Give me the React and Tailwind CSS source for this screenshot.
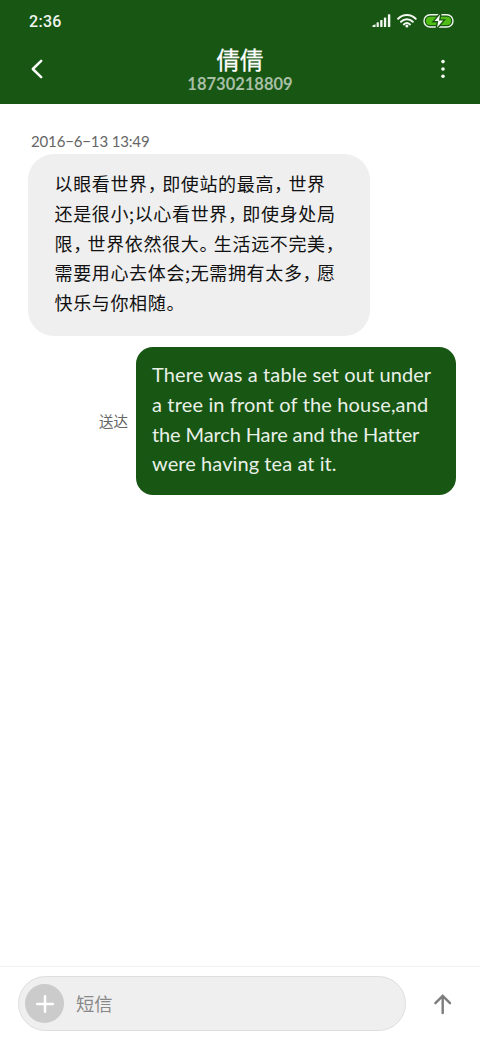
import React from 'react';

function StatusIcons() {
  return (
    <svg className="block h-[16px] w-[84px]" viewBox="0 0 84 16" fill="none">
      <g fill="#f4f8f3">
        <path d="M2.5 14v-1.6l3-1.2V14z" />
        <rect x="6.6" y="9.3" width="2.2" height="4.7" rx=".6" />
        <rect x="10.2" y="7" width="2.3" height="7" rx=".6" />
        <rect x="13.9" y="4.4" width="2.3" height="9.6" rx=".6" />
        <rect x="17.9" y="1.3" width="2.4" height="12.7" rx=".6" />
      </g>
      <g stroke="#f4f8f3" strokeWidth="2" strokeLinecap="round">
        <path d="M28.1 5.8C33.2 .8 40.6 .8 45.7 5.8" />
        <path d="M31 8.7c3.4-3.3 8.4-3.3 11.8 0" />
        <path d="M33.8 11.4c1.8-1.7 4.4-1.7 6.2 0" />
      </g>
      <circle cx="36.9" cy="13" r="1.5" fill="#f4f8f3" />
      <rect x="54" y="1.8" width="29" height="12.2" rx="6.1" stroke="#edf5eb" strokeWidth="1.4" />
      <rect x="56" y="3.8" width="25" height="8.2" rx="4.1" fill="#50bd16" />
      <path d="M71.2-1L63 8.7h4.4L66 16.8l8.5-9.9h-4.7z" fill="#fff" stroke="#185613" strokeWidth="1.4" />
    </svg>
  );
}

function Zh({ children }) {
  return (
    <p className="h-[29.75px] whitespace-nowrap">
      {children.split(/([，。;])/).map((part, i) => {
        if (part === '，' || part === '。') {
          return (
            <span key={i} className="inline-block w-[14.4px] [font-feature-settings:'halt']">{part}</span>
          );
        }
        if (part === ';') {
          return <span key={i} className="inline-block w-[5.6px]">;</span>;
        }
        return part;
      })}
    </p>
  );
}

export default function App() {
  return (
    <div className="flex h-[1040px] w-[480px] flex-col bg-white font-['Lato','Noto_Sans_CJK_SC',sans-serif]">
      <header className="h-[104px] shrink-0 bg-[#185613] text-white">
        <div className="flex h-[42px] items-center justify-between pl-[29px] pr-[26px]">
          <span className="mt-px font-['Roboto',sans-serif] text-[16px] font-medium tracking-[0.3px] text-[#f0f5ef]">2:36</span>
          <StatusIcons />
        </div>
        <div className="flex h-[62px] items-start justify-between pl-[30px] pr-[30px]">
          <svg className="mt-[16px] block h-[22px] w-[14px]" viewBox="0 0 14 22" fill="none" stroke="#f7faf6" strokeWidth="2.5" strokeLinecap="round" strokeLinejoin="round">
            <path d="M11.2 2.8L2.8 11l8.4 8.2" />
          </svg>
          <div className="flex flex-col items-center pt-[3px]">
            <h1 className="h-[28px] font-['Noto_Sans_CJK_SC',sans-serif] text-[23.5px] font-normal leading-[28px] [-webkit-text-stroke:0.3px_#fff]">倩倩</h1>
            <span className="h-[20px] text-[16.5px] font-bold leading-[22px] text-[#a7bfa5]">18730218809</span>
          </div>
          <svg className="mt-[16px] block h-[22px] w-[14px]" viewBox="0 0 14 22" fill="#f7faf6">
            <circle cx="7" cy="3.6" r="1.8" />
            <circle cx="7" cy="11" r="1.8" />
            <circle cx="7" cy="18.3" r="1.8" />
          </svg>
        </div>
      </header>

      <main className="flex flex-1 flex-col pl-[28px] pr-[24px] pt-[27px]">
        <time className="h-[23px] pl-[3px] text-[15px] leading-[20px] tracking-[-0.15px] text-[#666]">2016−6−13 13:49</time>
        <div className="h-[182px] w-[342px] rounded-[26px] bg-[#efefef] pl-[26.5px] pt-[14px] font-['Noto_Sans_CJK_SC',sans-serif] text-[18px] leading-[30px] tracking-[0.65px] text-[#111]">
          <Zh>以眼看世界，即使站的最高，世界</Zh>
          <Zh>还是很小;以心看世界，即使身处局</Zh>
          <Zh>限，世界依然很大。生活远不完美，</Zh>
          <Zh>需要用心去体会;无需拥有太多，愿</Zh>
          <Zh>快乐与你相随。</Zh>
        </div>
        <div className="mt-[11px] flex items-center justify-end gap-[8px]">
          <span className="font-['Noto_Sans_CJK_SC',sans-serif] text-[14.5px] leading-[20px] text-[#666]">送达</span>
          <div className="h-[148px] w-[320px] whitespace-nowrap rounded-[17px] bg-[#185613] pl-[16px] pt-[13px] text-[20px] leading-[29.8px] text-[#e9f0e8]">
            <p className="tracking-[0.1px]">There was a table set out under</p>
            <p className="tracking-[0.15px]">a tree in front of the house,and</p>
            <p className="tracking-[-0.12px]">the March Hare and the Hatter</p>
            <p className="tracking-[0.08px]">were having tea at it.</p>
          </div>
        </div>
      </main>

      <footer className="flex h-[74px] shrink-0 items-start border-t border-[#f0f0f0] pl-[18px] pt-[9px]">
        <div className="flex h-[55px] w-[388px] items-center rounded-full border border-[#dedede] bg-[#efefef] pl-[6px]">
          <button className="flex size-[39px] items-center justify-center rounded-full bg-[#cbcbcb]">
            <svg className="block size-[20px]" viewBox="0 0 20 20" stroke="#fff" strokeWidth="2.5" strokeLinecap="round">
              <path d="M10 2.2v15.6M2.2 10h15.6" />
            </svg>
          </button>
          <span className="-mt-px ml-[12px] font-['Noto_Sans_CJK_SC',sans-serif] text-[18.3px] leading-[26px] text-[#888]">短信</span>
        </div>
        <svg className="ml-[27px] mt-[17px] block h-[22px] w-[20px]" viewBox="0 0 20 22" fill="none" stroke="#7d7d7d" strokeWidth="2.4" strokeLinecap="round" strokeLinejoin="round">
          <path d="M9.7 20V2.8M2.4 10.2L9.7 2.8 17 10.2" />
        </svg>
      </footer>
    </div>
  );
}
